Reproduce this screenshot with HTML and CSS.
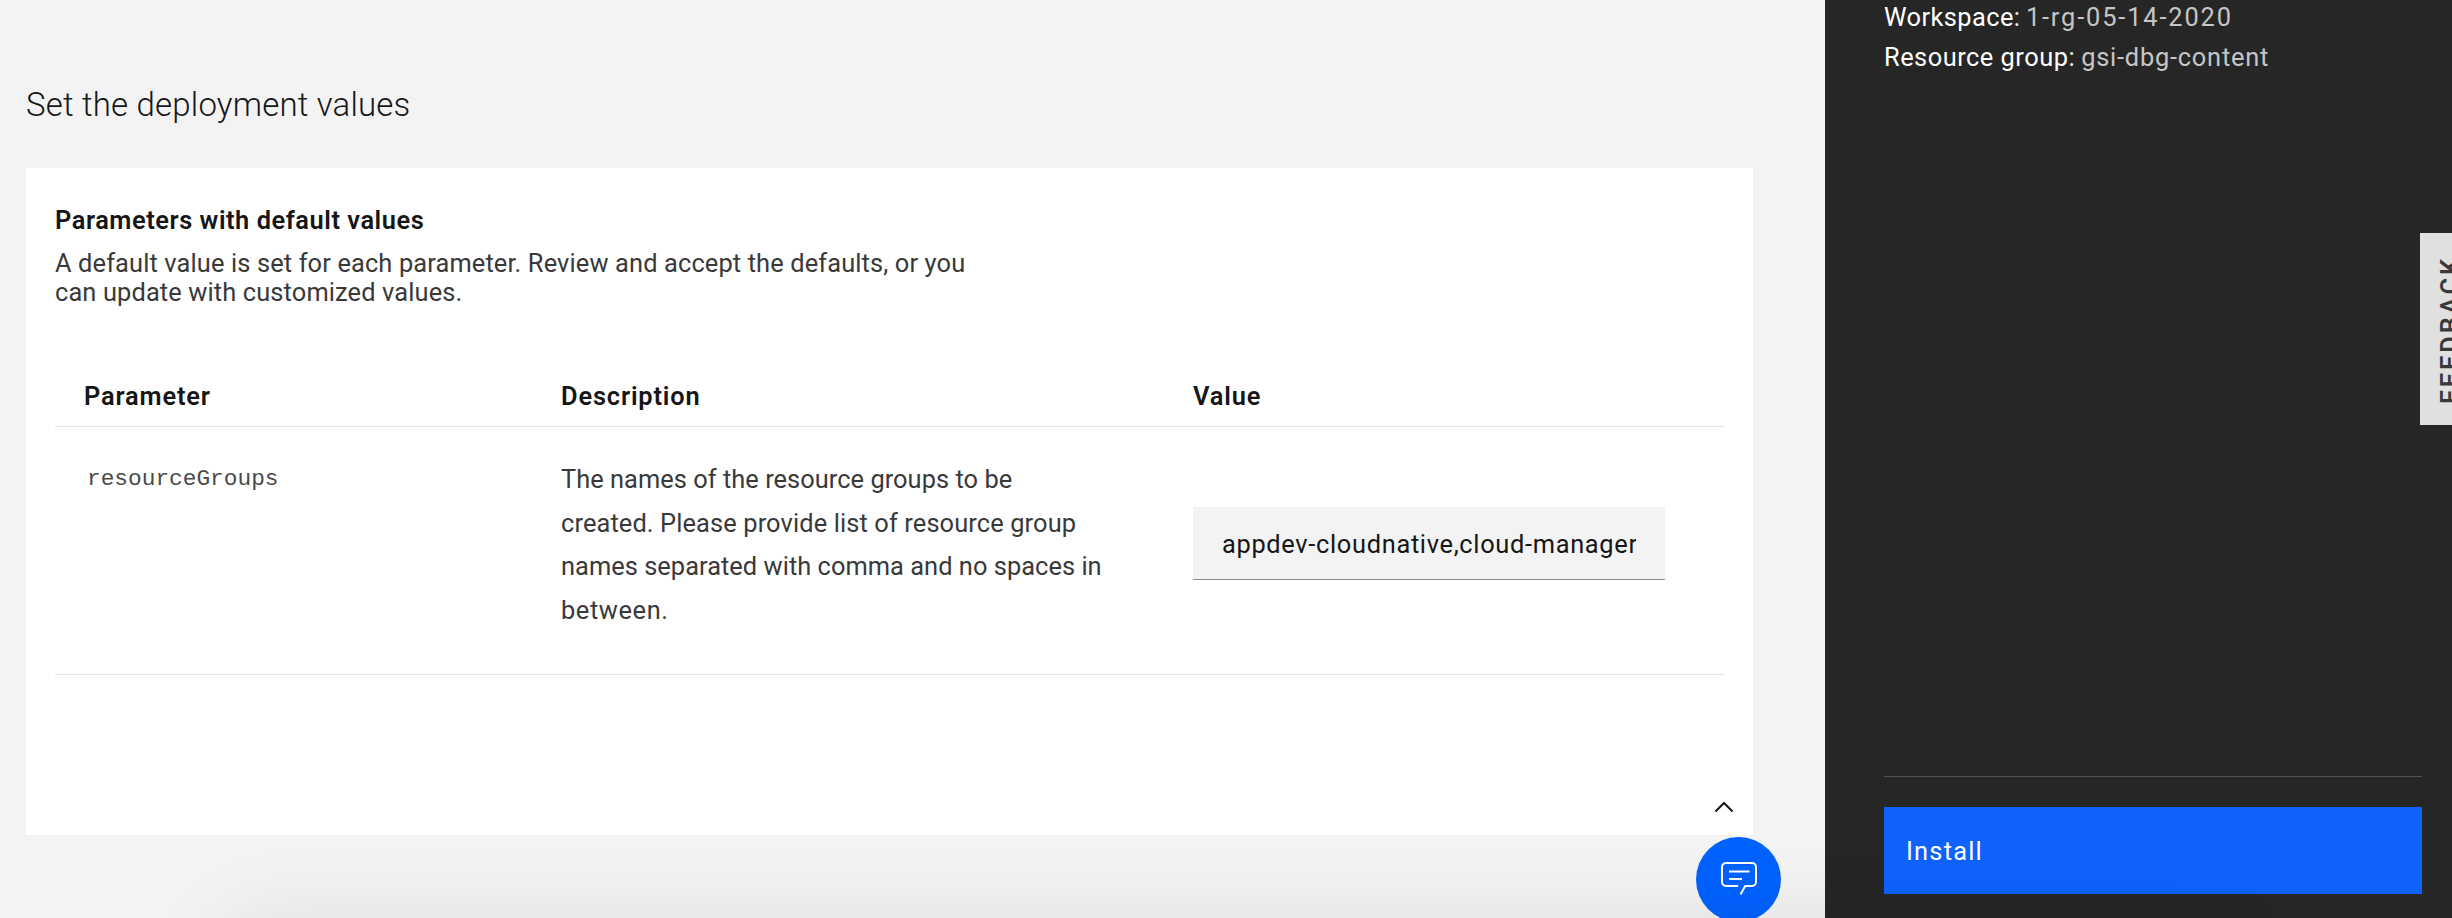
FILE: index.html
```
<!DOCTYPE html>
<html lang="en">
<head>
<meta charset="utf-8">
<title>Set the deployment values</title>
<link rel="stylesheet" href="styles.css">
</head>
<body>
<div class="page">
  <main class="main">
    <h2 class="heading">Set the deployment values</h2>
    <section class="card">
      <h3 class="card-title">Parameters with default values</h3>
      <p class="card-intro">A default value is set for each parameter. Review and accept the defaults, or you<br>can update with customized values.</p>
      <div class="table">
        <div class="row row-head">
          <div class="th">Parameter</div>
          <div class="th">Description</div>
          <div class="th">Value</div>
        </div>
        <div class="row row-body">
          <div class="param">resourceGroups</div>
          <div class="desc">
            <div class="line-a">The names of the resource groups to be</div>
            <div class="line-b">created. Please provide list of resource group</div>
            <div class="line-a">names separated with comma and no spaces in</div>
            <div class="line-c">between.</div>
          </div>
          <div class="value"><div class="field"><div class="field-text">appdev-cloudnative,cloud-manager</div></div></div>
        </div>
      </div>
      <svg class="chevron" width="20" height="14" viewBox="0 0 20 14"><path d="M1.500 11.500 10 3 18.500 11.500" fill="none" stroke="#161616" stroke-width="2"/></svg>
    </section>
  </main>
  <aside class="side">
    <div class="summary">
      <div><span class="key-a">Workspace:</span><span class="val-a">1-rg-05-14-2020</span></div>
      <div><span class="key-b">Resource group:</span><span class="val-b">gsi-dbg-content</span></div>
    </div>
    <div class="actions"><button class="install">Install</button></div>
  </aside>
  <div class="feedback"><span class="feedback-text">FEEDBACK</span></div>
  <div class="chat">
    <svg width="38" height="36" viewBox="0 0 38 36" fill="none" stroke="#fff" stroke-width="2">
      <path d="M18.200 26H6a4 4 0 0 1-4-4V7a4 4 0 0 1 4-4H32a4 4 0 0 1 4 4V22a4 4 0 0 1-4 4H25.200L20.500 34.500"/>
      <path d="M9 11.500H29.500M9 19H22"/>
    </svg>
  </div>
  <div class="shade"></div>
</div>
</body>
</html>
```
FILE: styles.css
```
* { box-sizing: border-box; }
body { margin: 0; background: #f3f3f3; color: #161616; font: 25.4px/32px Roboto, "Liberation Sans", sans-serif; }
h2, h3, p { margin: 0; }
.page { position: relative; display: flex; height: 918px; overflow: hidden; }
.main { width: 1825px; padding: 85px 72px 0 26px; }
.heading { font-size: 33px; line-height: 40px; font-weight: 300; letter-spacing: .18px; }
.card { position: relative; height: 667px; margin-top: 43px; padding: 36px 29px 0; background: #fff; }
.card-title { font-size: 25.4px; line-height: 32px; font-weight: 600; letter-spacing: .55px; }
.card-intro { margin-top: 13px; line-height: 29px; color: #393939; letter-spacing: .13px; white-space: nowrap; }
.table { margin-top: 73px; }
.row { display: grid; grid-template-columns: 477px 632px 1fr; padding-left: 29px; border-bottom: 1px solid #e0e0e0; }
.row-head { height: 47px; }
.th { font-weight: 600; letter-spacing: .85px; }
.row-body { height: 248px; }
.param { padding: 30px 0 0 3px; font: 22.8px/44px "Liberation Mono", monospace; color: #4a4a4a; }
.desc { padding-top: 31px; line-height: 43.6px; color: #393939; white-space: nowrap; }
.line-a { letter-spacing: .04px; }
.line-b { letter-spacing: .12px; }
.line-c { letter-spacing: .6px; }
.value { padding-top: 80px; }
.field { width: 472px; height: 73px; padding: 21px 29px; background: #f3f3f3; border-bottom: 1px solid #8d8d8d; }
.field-text { overflow: hidden; white-space: nowrap; letter-spacing: .68px; }
.chevron { position: absolute; right: 19px; bottom: 21px; }
.side { flex: 1; display: flex; flex-direction: column; padding: 0 30px 24px 59px; background: #262626; color: #fff; }
.summary { margin-top: -3px; line-height: 40px; white-space: nowrap; }
.key-a { letter-spacing: .42px; margin-right: 5.5px; }
.val-a { letter-spacing: 1.85px; color: #c6c6c6; }
.key-b { letter-spacing: .5px; margin-right: 6px; }
.val-b { letter-spacing: .78px; color: #c6c6c6; }
.actions { margin-top: auto; padding-top: 30px; border-top: 1px solid #525252; }
.install { display: block; width: 100%; height: 87px; padding: 0 0 0 22px; border: 0; background: #0f62fe; color: #fff; font: inherit; text-align: left; letter-spacing: 1.2px; }
.feedback { position: absolute; right: 0; top: 233px; width: 32px; height: 192px; overflow: hidden; background: #e0e0e0; }
.feedback-text { display: block; width: 32px; height: 192px; margin-left: 13.5px; padding-top: 21px; line-height: 32px; writing-mode: vertical-rl; transform: rotate(180deg); font-weight: 600; letter-spacing: 2.9px; color: #393939; }
.chat { position: absolute; left: 1696px; top: 837px; width: 85px; height: 85px; padding: 23px 0 0 24px; border-radius: 50%; background: #0062ff; }
.chat svg { display: block; }
.shade { position: absolute; left: 230px; top: 930px; width: 1990px; height: 100px; box-shadow: 0 0 90px rgba(0, 0, 0, .11); }
```
